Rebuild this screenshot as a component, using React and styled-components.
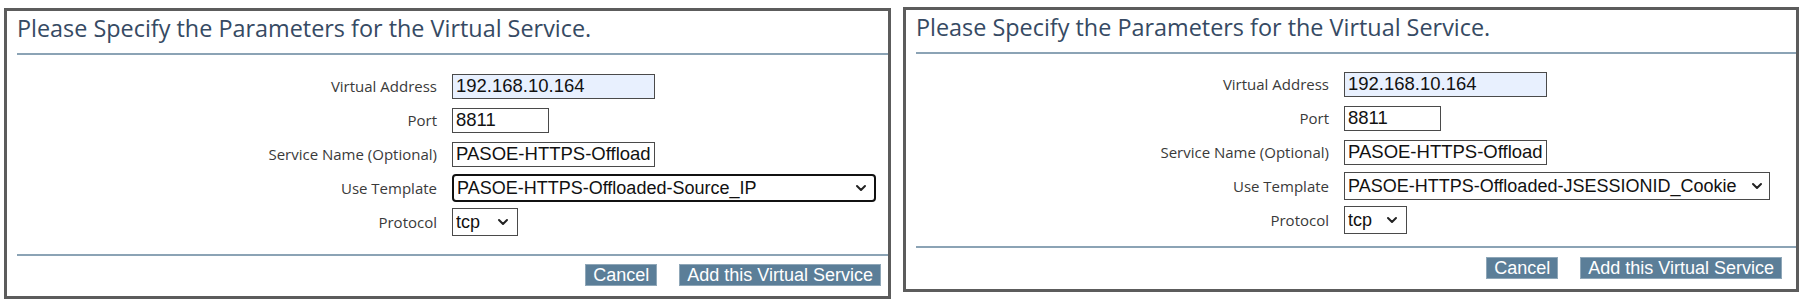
import React from 'react';
import styled, { createGlobalStyle } from 'styled-components';
import { ChevronDown } from 'lucide-react';

const Global = createGlobalStyle`
  body {
    margin: 0;
    background: #fff;
  }
`;

const Page = styled.div`
  display: flex;
  align-items: flex-start;
  gap: 12px;
  padding: 7px 0 0 4px;
`;

const Panel = styled.section`
  box-sizing: border-box;
  width: ${(p) => p.$width}px;
  margin-top: ${(p) => p.$offset || 0}px;
  border: 3px solid #5c5c5c;
  background: #fff;
  display: flex;
  flex-direction: column;
`;

const Title = styled.h2`
  margin: 0;
  padding: 2px 10px 0;
  height: 42px;
  box-sizing: border-box;
  font-family: "Open Sans", sans-serif;
  font-weight: 400;
  font-size: 23.4px;
  line-height: 30px;
  color: #364a63;
  white-space: nowrap;
`;

const Rule = styled.hr`
  margin: 0 0 0 10px;
  border: 0;
  height: 2px;
  background: #8ba3b5;
`;

const Form = styled.div`
  display: grid;
  grid-template-columns: ${(p) => p.$labelWidth}px auto;
  grid-auto-rows: 34px;
  column-gap: 15px;
  align-items: center;
  padding: ${(p) => p.$top}px 0 ${(p) => p.$bottom}px;
`;

const Label = styled.label`
  justify-self: end;
  font-family: "Open Sans", sans-serif;
  font-size: 15px;
  color: #3a3a3a;
  white-space: nowrap;
`;

const Field = styled.input`
  box-sizing: border-box;
  width: ${(p) => p.$w}px;
  height: 25px;
  margin: 0;
  padding: 0 3px;
  border: 1px solid #4a4a4a;
  background: ${(p) => (p.$filled ? '#e8f0fe' : '#fff')};
  font-family: "Liberation Sans", Arial, sans-serif;
  font-size: 18.5px;
  color: #111;
  outline: none;
`;

const Select = styled.div`
  box-sizing: border-box;
  width: ${(p) => p.$w}px;
  height: 28px;
  display: flex;
  align-items: center;
  gap: 2px;
  padding: 0 ${(p) => p.$pr}px 0 3px;
  border: ${(p) => (p.$focused ? '2px solid #111' : '1px solid #4a4a4a')};
  border-radius: ${(p) => (p.$focused ? '4px' : '0')};
  background: #fff;
  font-family: "Liberation Sans", Arial, sans-serif;
  font-size: 18px;
  color: #111;
  white-space: nowrap;

  svg {
    flex: none;
    color: #222;
  }
`;

const SelectText = styled.span`
  flex: 1;
  min-width: 0;
  overflow: hidden;
`;

const Footer = styled.div`
  display: flex;
  justify-content: flex-end;
  gap: 22px;
  padding: ${(p) => p.$top}px ${(p) => p.$right}px 10px 0;
`;

const Button = styled.button`
  height: 22px;
  margin: 0;
  padding: 0 7px;
  border: 1px solid #8fa7b8;
  background: #5b7e98;
  color: #fff;
  font-family: "Liberation Sans", Arial, sans-serif;
  font-size: 18px;
  line-height: 20px;
  cursor: pointer;
`;

function ServicePanel({ width, offset, formTop, formBottom, footTop, labelWidth, buttonRight, template, templateWidth, templatePad, focused, protocolWidth }) {
  return (
    <Panel $width={width} $offset={offset}>
      <Title>Please Specify the Parameters for the Virtual Service.</Title>
      <Rule />
      <Form $labelWidth={labelWidth} $top={formTop} $bottom={formBottom}>
        <Label>Virtual Address</Label>
        <Field $w={203} $filled readOnly value="192.168.10.164" />
        <Label>Port</Label>
        <Field $w={97} readOnly value="8811" />
        <Label>Service Name (Optional)</Label>
        <Field $w={203} readOnly value="PASOE-HTTPS-Offloaded-Source_IP" />
        <Label>Use Template</Label>
        <Select $w={templateWidth} $pr={templatePad} $focused={focused}>
          <SelectText>{template}</SelectText>
          <ChevronDown size={16} strokeWidth={3} />
        </Select>
        <Label>Protocol</Label>
        <Select $w={protocolWidth} $pr={6}>
          <SelectText>tcp</SelectText>
          <ChevronDown size={16} strokeWidth={3} />
        </Select>
      </Form>
      <Rule />
      <Footer $top={footTop} $right={buttonRight}>
        <Button type="button">Cancel</Button>
        <Button type="button">Add this Virtual Service</Button>
      </Footer>
    </Panel>
  );
}

export default function App() {
  return (
    <>
      <Global />
      <Page>
        <ServicePanel
          width={887}
          offset={1}
          formTop={14}
          formBottom={15}
          footTop={8}
          labelWidth={430}
          buttonRight={7}
          template="PASOE-HTTPS-Offloaded-Source_IP"
          templateWidth={424}
          templatePad={5}
          focused
          protocolWidth={66}
        />
        <ServicePanel
          width={896}
          formTop={13}
          formBottom={9}
          footTop={9}
          labelWidth={423}
          buttonRight={14}
          template="PASOE-HTTPS-Offloaded-JSESSIONID_Cookie"
          templateWidth={426}
          templatePad={4}
          protocolWidth={63}
        />
      </Page>
    </>
  );
}
